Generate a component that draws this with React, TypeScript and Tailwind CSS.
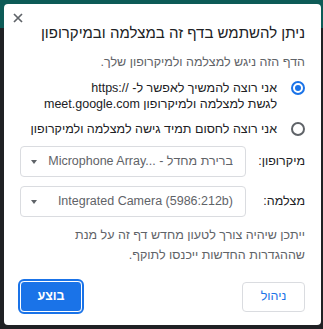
import React from "react";

const font = "[font-family:'Liberation_Sans','DejaVu_Sans',Arial,sans-serif]";

function Radio({ checked }: { checked: boolean }) {
  return (
    <span
      className={`mt-[1px] flex h-[14px] w-[14px] shrink-0 items-center justify-center rounded-full border-2 ${
        checked ? "border-[#1a73e8]" : "border-[#5f6368]"
      }`}
    >
      {checked && <span className="h-[6px] w-[6px] rounded-full bg-[#1a73e8]" />}
    </span>
  );
}

function Select({ children }: { children: React.ReactNode }) {
  return (
    <div className="flex h-[31px] w-[226px] items-center justify-between rounded-[4px] border border-[#dadce0] bg-white pr-[12px] pl-[8px]">
      <span className="truncate text-[12.5px] text-[#5f6368]">{children}</span>
      <span className="ml-[2px] h-0 w-0 border-x-[3.5px] border-t-[4px] border-x-transparent border-t-[#5f6368]" />
    </div>
  );
}

export default function App() {
  return (
    <div className="h-[329px] w-[323px] overflow-hidden bg-[linear-gradient(to_bottom,#0d5b57_0,#0d5b57_28px,#202124_28px)] pt-[4px] pl-[4px]">
      <div
        dir="rtl"
        className={`${font} relative h-[321px] w-[317px] rounded-[4px] bg-white px-[16px] pt-[19px] text-[#202124]`}
      >
        <svg width="18" height="18" viewBox="0 0 18 18" className="absolute top-[5px] left-[5px]">
          <path d="M5 5l8 8M13 5l-8 8" stroke="#5f6368" strokeWidth="1.7" />
        </svg>
        <h1 className="whitespace-nowrap text-[15px] leading-[20px]">
          ניתן להשתמש בדף זה במצלמה ובמיקרופון
        </h1>
        <p className="mt-[10px] text-[12.5px] leading-[18px] text-[#5f6368]">
          הדף הזה ניגש למצלמה ולמיקרופון שלך.
        </p>

        <div className="mt-[9px] flex flex-col gap-[9px] text-[12.5px] leading-[16px]">
          <label className="flex items-start gap-[14px]">
            <Radio checked />
            <span className="whitespace-nowrap">
              אני רוצה להמשיך לאפשר ל- <bdi dir="ltr">https://</bdi>
              <br />
              לגשת למצלמה ולמיקרופון <bdi dir="ltr">meet.google.com</bdi>
            </span>
          </label>
          <label className="flex items-start gap-[14px]">
            <Radio checked={false} />
            <span className="whitespace-nowrap">אני רוצה לחסום תמיד גישה למצלמה ולמיקרופון</span>
          </label>
        </div>

        <div className="mt-[9px] flex flex-col gap-[9px] text-[12.5px]">
          <div className="flex items-center justify-between">
            <span>מיקרופון:</span>
            <Select>
              ברירת מחדל - <bdi dir="ltr">Microphone Array...</bdi>
            </Select>
          </div>
          <div className="flex items-center justify-between">
            <span>מצלמה:</span>
            <Select>
              <bdi dir="ltr">Integrated Camera (5986:212b)</bdi>
            </Select>
          </div>
        </div>

        <p className="mt-[8px] text-[12.5px] leading-[20px] text-[#5f6368]">
          ייתכן שיהיה צורך לטעון מחדש דף זה על מנת
          <br />
          שההגדרות החדשות ייכנסו לתוקף.
        </p>

        <div className="mt-[16px] flex items-center justify-between">
          <button
            type="button"
            className="h-[30px] w-[63px] rounded-[4px] border border-[#dadce0] bg-white text-[12.5px] font-medium text-[#1a73e8]"
          >
            ניהול
          </button>
          <button
            type="button"
            className="h-[31px] w-[62px] rounded-[4px] border border-white bg-[#1a73e8] text-[12.5px] font-bold text-white outline-2 outline-[#1a73e8]"
          >
            בוצע
          </button>
        </div>
      </div>
    </div>
  );
}
